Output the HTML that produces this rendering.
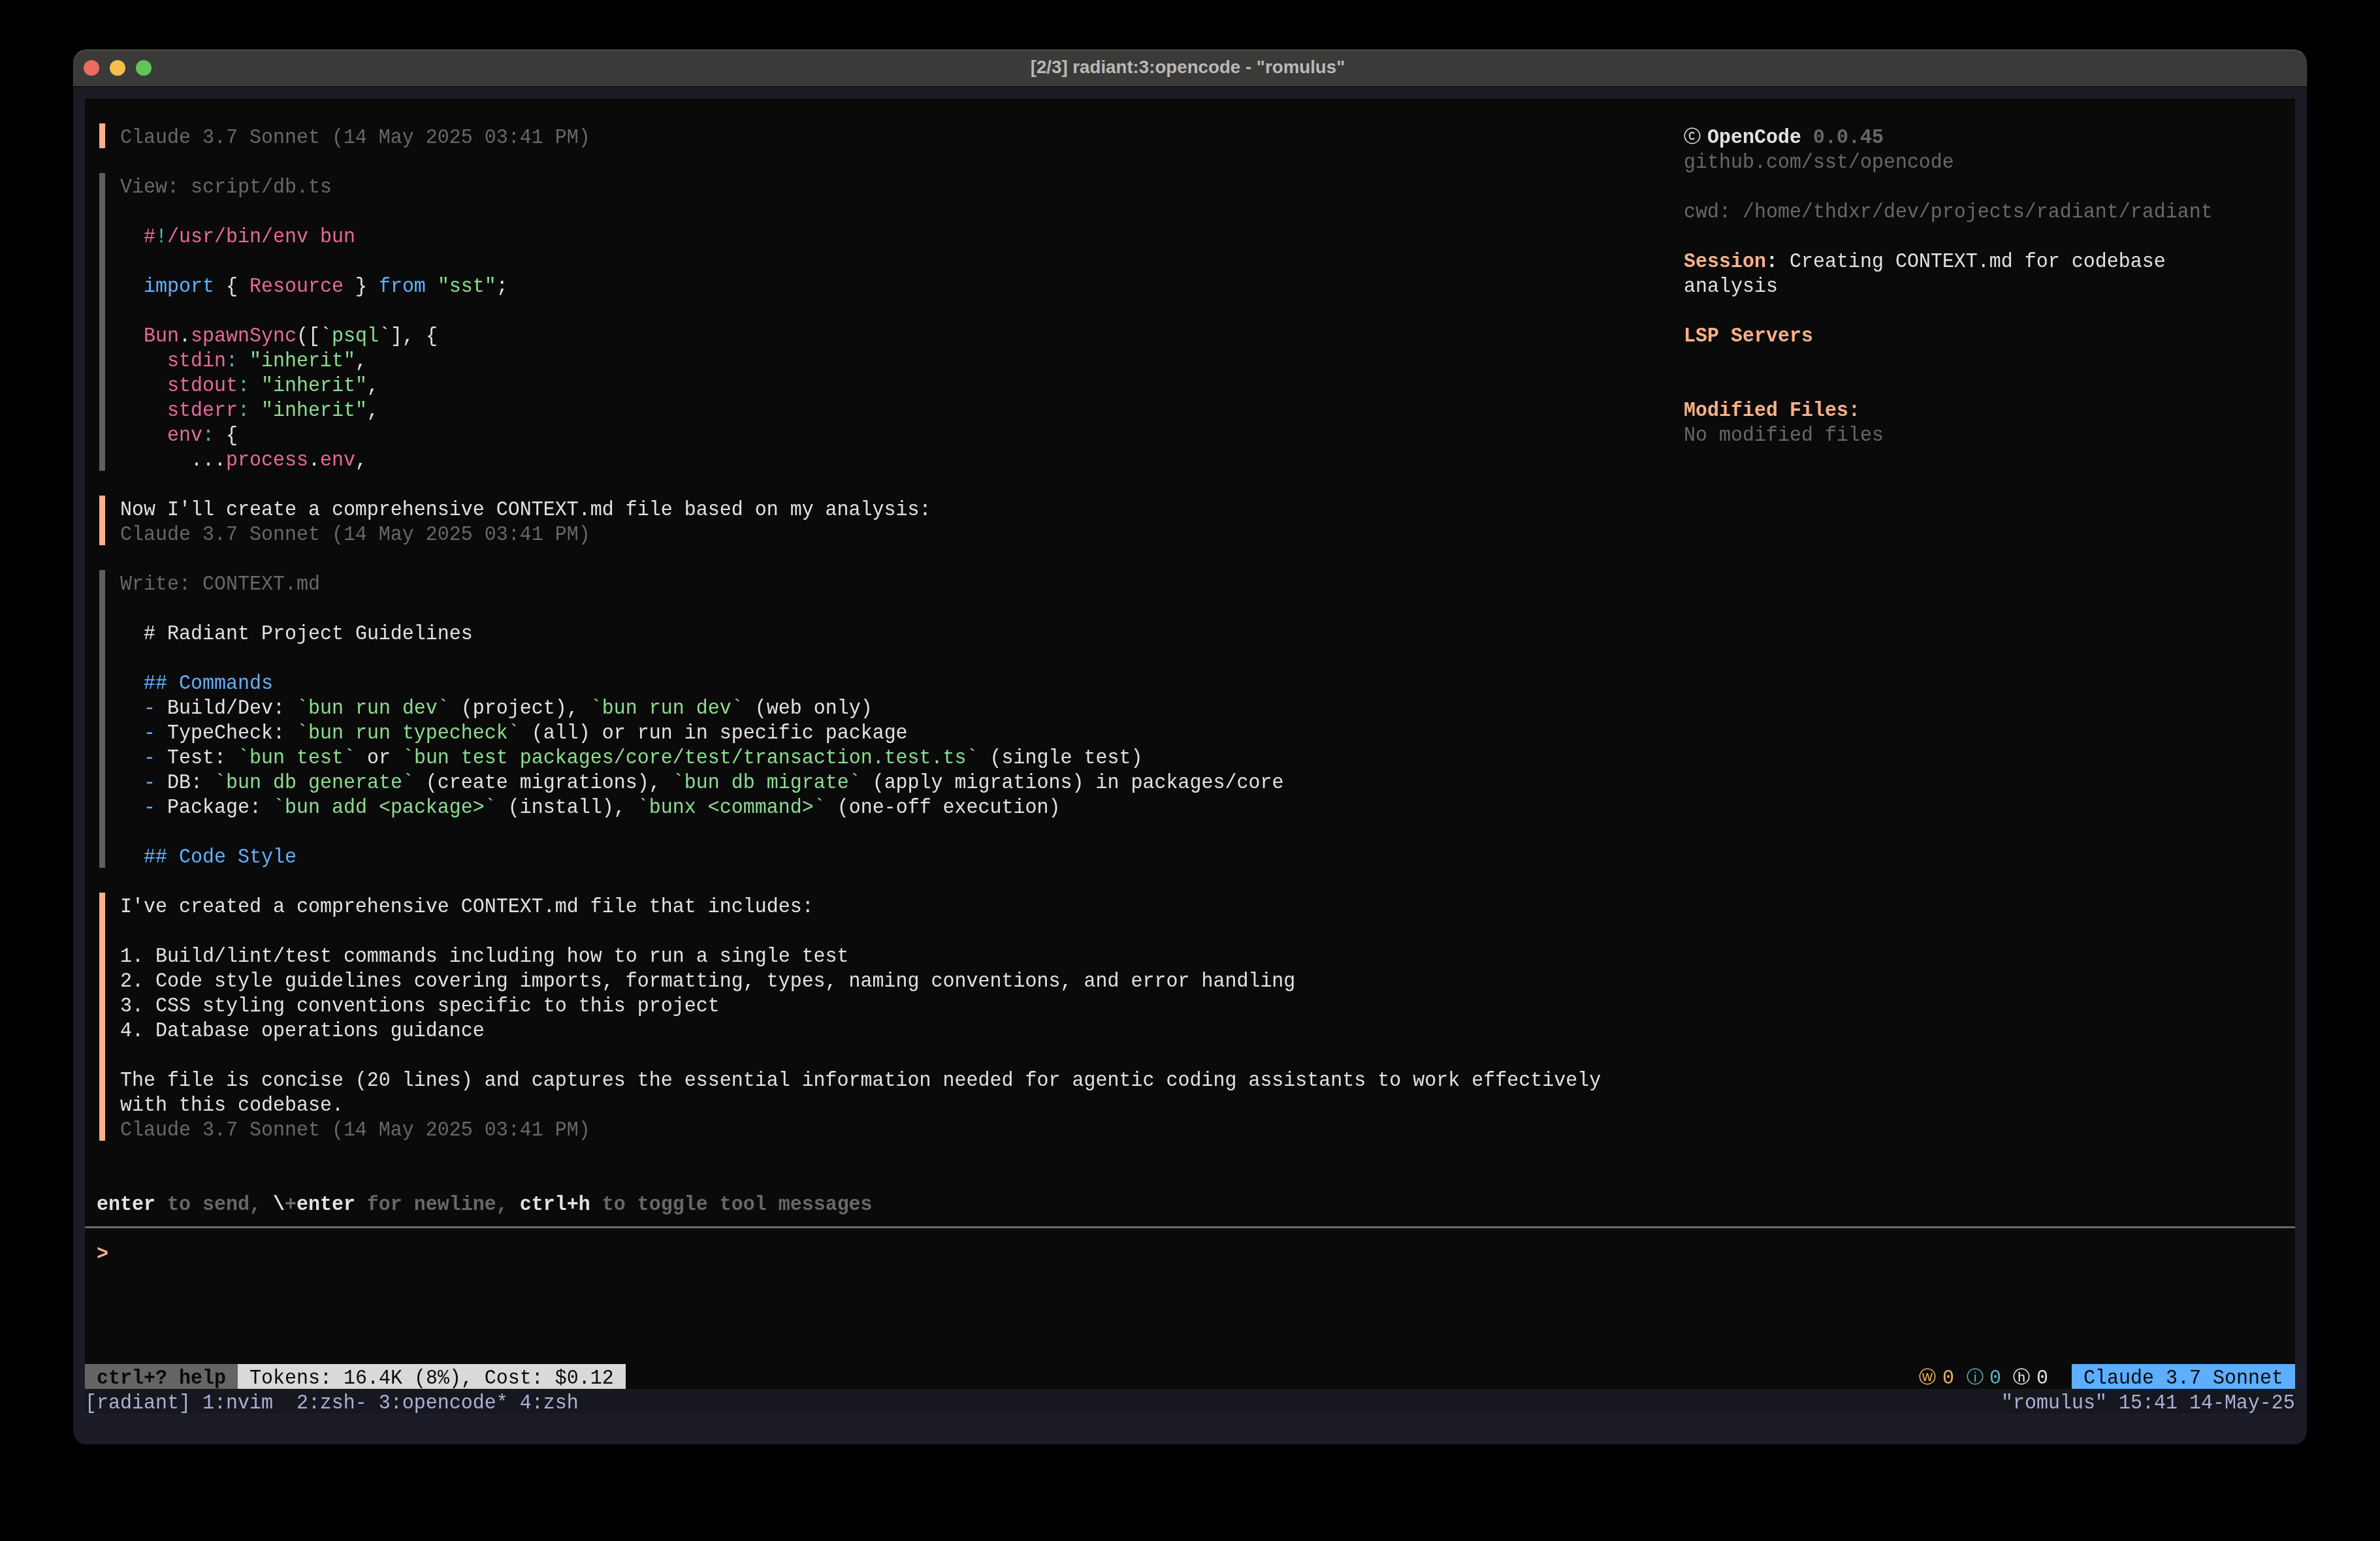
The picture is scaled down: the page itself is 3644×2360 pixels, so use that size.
<!DOCTYPE html>
<html><head><meta charset="utf-8">
<style>
html,body{margin:0;padding:0;background:#000;}
body{width:3644px;height:2360px;position:relative;overflow:hidden;}
.win{position:absolute;left:112px;top:76px;width:3420px;height:2136px;border-radius:20px;background:#1c1c27;overflow:hidden;}
.tb{position:absolute;left:0;top:0;width:3420px;height:57px;background:#3a3a38;box-sizing:border-box;border-bottom:1px solid #000;}
.tb .sep{position:absolute;left:0;right:0;bottom:-1px;height:1px;background:#000;}
.dot{position:absolute;top:16px;width:24px;height:24px;border-radius:50%;}
.ttl{position:absolute;left:-3.5px;width:3420px;top:12px;text-align:center;font:bold 27.7px/30px "Liberation Sans",sans-serif;color:#b9b9b7;}
.term{position:absolute;left:18px;top:75px;width:3384px;height:1976px;background:#0a0a0a;}
.tmux{position:absolute;left:18px;top:2051px;width:3384px;height:38px;background:#17171f;}
.txt{position:absolute;left:0;top:0;width:3384px;height:2014px;will-change:transform;}
.r{position:absolute;height:38px;white-space:pre;transform:scaleY(1.04);transform-origin:0 30px;font-family:"Liberation Mono",monospace;font-size:29.995px;line-height:38px;}
.r span{position:relative;top:3px;}
.bar{position:absolute;left:22px;width:9px;}
.peach{background:#fbb088;}
.gray{background:#5f5f5f;}
.w{color:#e2e2e2}.m{color:#686868}.p{color:#fbb088}.b{color:#62b0ff}.g{color:#8bdc8f}.k{color:#e6699a}.c{color:#56b6c2}.o{color:#f7b060}.l{color:#a9b1d6}.x{color:#0a0a0a}
.B{font-weight:bold}
.hi{position:absolute;left:0;top:0;width:3420px;height:57px;border-radius:20px 20px 0 0;box-sizing:border-box;border-top:1.5px solid rgba(255,255,255,0.24);border-left:1px solid rgba(255,255,255,0.06);border-right:1px solid rgba(255,255,255,0.06);pointer-events:none;}
.ic{position:absolute;overflow:visible}
.hl{position:absolute;left:0;top:1727px;width:3384px;height:3px;background:#6a6a6a;}
.sb1{position:absolute;left:0;top:1938px;width:234px;height:38px;background:#656565;}
.sb2{position:absolute;left:234px;top:1938px;width:594px;height:38px;background:#d9d9d9;}
.sb3{position:absolute;left:3042px;top:1938px;width:342px;height:38px;background:#5daefe;}
</style></head><body>
<div class="win">
<div class="tb"><div class="hi"></div><div class="dot" style="left:16px;background:#ed6a5e"></div><div class="dot" style="left:56px;background:#f4bf4f"></div><div class="dot" style="left:96px;background:#61c554"></div>
<div class="ttl">[2/3] radiant:3:opencode - "romulus"</div></div>
<div class="tmux"></div>
<div class="term">
<div class="hl"></div>
<div class="sb1"></div><div class="sb2"></div><div class="sb3"></div>
<div class="bar peach" style="top:38px;height:38px"></div>
<div class="bar gray" style="top:114px;height:456px"></div>
<div class="bar peach" style="top:608px;height:76px"></div>
<div class="bar gray" style="top:722px;height:456px"></div>
<div class="bar peach" style="top:1216px;height:380px"></div>
<div class="txt">
<div class="r" style="top:38px;left:54px"><span class="m">Claude 3.7 Sonnet (14 May 2025 03:41 PM)</span></div>
<div class="r" style="top:38px;left:2484px"><span class="w B">OpenCode</span><span class="w"> </span><span class="m B">0.0.45</span></div>
<div class="r" style="top:76px;left:2448px"><span class="m">github.com/sst/opencode</span></div>
<div class="r" style="top:114px;left:54px"><span class="m">View: script/db.ts</span></div>
<div class="r" style="top:152px;left:2448px"><span class="m">cwd: /home/thdxr/dev/projects/radiant/radiant</span></div>
<div class="r" style="top:190px;left:90px"><span class="k">#</span><span class="c">!</span><span class="k">/usr/bin/env bun</span></div>
<div class="r" style="top:228px;left:2448px"><span class="p B">Session</span><span class="w B">:</span><span class="w"> Creating CONTEXT.md for codebase</span></div>
<div class="r" style="top:266px;left:90px"><span class="b">import</span><span class="w"> { </span><span class="k">Resource</span><span class="w"> } </span><span class="b">from</span><span class="w"> </span><span class="g">"sst"</span><span class="w">;</span></div>
<div class="r" style="top:266px;left:2448px"><span class="w">analysis</span></div>
<div class="r" style="top:342px;left:90px"><span class="k">Bun</span><span class="w">.</span><span class="k">spawnSync</span><span class="w">([`</span><span class="g">psql</span><span class="w">`], {</span></div>
<div class="r" style="top:342px;left:2448px"><span class="p B">LSP Servers</span></div>
<div class="r" style="top:380px;left:126px"><span class="k">stdin</span><span class="c">:</span><span class="w"> </span><span class="g">"inherit"</span><span class="w">,</span></div>
<div class="r" style="top:418px;left:126px"><span class="k">stdout</span><span class="c">:</span><span class="w"> </span><span class="g">"inherit"</span><span class="w">,</span></div>
<div class="r" style="top:456px;left:126px"><span class="k">stderr</span><span class="c">:</span><span class="w"> </span><span class="g">"inherit"</span><span class="w">,</span></div>
<div class="r" style="top:456px;left:2448px"><span class="p B">Modified Files:</span></div>
<div class="r" style="top:494px;left:126px"><span class="k">env</span><span class="c">:</span><span class="w"> {</span></div>
<div class="r" style="top:494px;left:2448px"><span class="m">No modified files</span></div>
<div class="r" style="top:532px;left:162px"><span class="w">...</span><span class="k">process</span><span class="w">.</span><span class="k">env</span><span class="w">,</span></div>
<div class="r" style="top:608px;left:54px"><span class="w">Now I'll create a comprehensive CONTEXT.md file based on my analysis:</span></div>
<div class="r" style="top:646px;left:54px"><span class="m">Claude 3.7 Sonnet (14 May 2025 03:41 PM)</span></div>
<div class="r" style="top:722px;left:54px"><span class="m">Write: CONTEXT.md</span></div>
<div class="r" style="top:798px;left:90px"><span class="w"># Radiant Project Guidelines</span></div>
<div class="r" style="top:874px;left:90px"><span class="b">## Commands</span></div>
<div class="r" style="top:912px;left:90px"><span class="b">- </span><span class="w">Build/Dev: </span><span class="g">`bun run dev`</span><span class="w"> (project), </span><span class="g">`bun run dev`</span><span class="w"> (web only)</span></div>
<div class="r" style="top:950px;left:90px"><span class="b">- </span><span class="w">TypeCheck: </span><span class="g">`bun run typecheck`</span><span class="w"> (all) or run in specific package</span></div>
<div class="r" style="top:988px;left:90px"><span class="b">- </span><span class="w">Test: </span><span class="g">`bun test`</span><span class="w"> or </span><span class="g">`bun test packages/core/test/transaction.test.ts`</span><span class="w"> (single test)</span></div>
<div class="r" style="top:1026px;left:90px"><span class="b">- </span><span class="w">DB: </span><span class="g">`bun db generate`</span><span class="w"> (create migrations), </span><span class="g">`bun db migrate`</span><span class="w"> (apply migrations) in packages/core</span></div>
<div class="r" style="top:1064px;left:90px"><span class="b">- </span><span class="w">Package: </span><span class="g">`bun add &lt;package&gt;`</span><span class="w"> (install), </span><span class="g">`bunx &lt;command&gt;`</span><span class="w"> (one-off execution)</span></div>
<div class="r" style="top:1140px;left:90px"><span class="b">## Code Style</span></div>
<div class="r" style="top:1216px;left:54px"><span class="w">I've created a comprehensive CONTEXT.md file that includes:</span></div>
<div class="r" style="top:1292px;left:54px"><span class="w">1. Build/lint/test commands including how to run a single test</span></div>
<div class="r" style="top:1330px;left:54px"><span class="w">2. Code style guidelines covering imports, formatting, types, naming conventions, and error handling</span></div>
<div class="r" style="top:1368px;left:54px"><span class="w">3. CSS styling conventions specific to this project</span></div>
<div class="r" style="top:1406px;left:54px"><span class="w">4. Database operations guidance</span></div>
<div class="r" style="top:1482px;left:54px"><span class="w">The file is concise (20 lines) and captures the essential information needed for agentic coding assistants to work effectively</span></div>
<div class="r" style="top:1520px;left:54px"><span class="w">with this codebase.</span></div>
<div class="r" style="top:1558px;left:54px"><span class="m">Claude 3.7 Sonnet (14 May 2025 03:41 PM)</span></div>
<div class="r" style="top:1672px;left:18px"><span class="w B">enter</span><span class="m B"> to send, </span><span class="w B">\</span><span class="m B">+</span><span class="w B">enter</span><span class="m B"> for newline, </span><span class="w B">ctrl+h</span><span class="m B"> to toggle tool messages</span></div>
<div class="r" style="top:1748px;left:18px"><span class="p B">&gt;</span></div>
<div class="r" style="top:1938px;left:0px"><span class="x B"> ctrl+? help </span></div>
<div class="r" style="top:1938px;left:234px"><span class="x"> Tokens: 16.4K (8%), Cost: $0.12 </span></div>
<div class="r" style="top:1938px;left:2844px"><span class="o">0</span></div>
<div class="r" style="top:1938px;left:2916px"><span class="c">0</span></div>
<div class="r" style="top:1938px;left:2988px"><span class="w">0</span></div>
<div class="r" style="top:1938px;left:3042px"><span class="x"> Claude 3.7 Sonnet </span></div>
<div class="r" style="top:1976px;left:0px"><span class="l">[radiant] 1:nvim  2:zsh- 3:opencode* 4:zsh</span></div>
<div class="r" style="top:1976px;left:2934px"><span class="l">"romulus" 15:41 14-May-25</span></div>
<svg class="ic" style="left:2446.2px;top:41.6px" width="30" height="30" viewBox="-15 -15 30 30"><circle cx="0" cy="0" r="11.7" fill="none" stroke="#e2e2e2" stroke-width="1.6"/><path d="M3.15,-3.4 A4.15,5.25 0 1 0 3.15,3.4" fill="none" stroke="#e2e2e2" stroke-width="1.9"/></svg>
<svg class="ic" style="left:2806.4px;top:1941.7px" width="30" height="30" viewBox="-15 -15 30 30"><circle cx="0" cy="0" r="11.7" fill="none" stroke="#f7b060" stroke-width="1.6"/><text x="0" y="7.3" text-anchor="middle" font-family="Liberation Sans" font-size="22" fill="#f7b060">w</text></svg>
<svg class="ic" style="left:2878.5px;top:1941.7px" width="30" height="30" viewBox="-15 -15 30 30"><circle cx="0" cy="0" r="11.7" fill="none" stroke="#56b6c2" stroke-width="1.6"/><text x="0" y="7.8" text-anchor="middle" font-family="Liberation Sans" font-size="21" fill="#56b6c2">i</text></svg>
<svg class="ic" style="left:2950.4px;top:1941.7px" width="30" height="30" viewBox="-15 -15 30 30"><circle cx="0" cy="0" r="11.7" fill="none" stroke="#eeeeee" stroke-width="1.6"/><text x="0" y="7.8" text-anchor="middle" font-family="Liberation Sans" font-size="21" fill="#eeeeee">h</text></svg>
</div>
</div>
</div>
</body></html>
